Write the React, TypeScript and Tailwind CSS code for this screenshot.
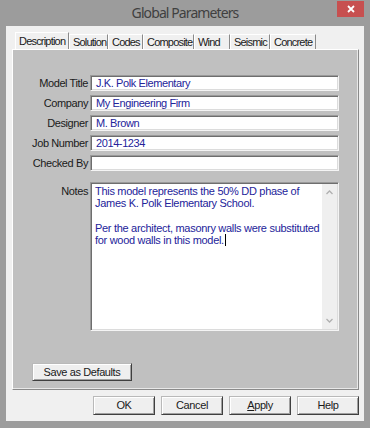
import React from "react";

const tabs: { label: string; w: string; selected?: boolean }[] = [
  { label: "Description", w: "w-[54px]", selected: true },
  { label: "Solution", w: "w-[39px]" },
  { label: "Codes", w: "w-[35px]" },
  { label: "Composite", w: "w-[51px]" },
  { label: "Wind", w: "w-[36px]" },
  { label: "Seismic", w: "w-[40px]" },
  { label: "Concrete", w: "w-[46px]" },
];

const fields: { label: string; value: string }[] = [
  { label: "Model Title", value: "J.K. Polk Elementary" },
  { label: "Company", value: "My Engineering Firm" },
  { label: "Designer", value: "M. Brown" },
  { label: "Job Number", value: "2014-1234" },
  { label: "Checked By", value: "" },
];

const sunken =
  "bg-white border border-t-[#9a9a9a] border-l-[#9a9a9a] border-b-[#f4f4f4] border-r-[#f4f4f4] shadow-[inset_1px_1px_0_#6e6e6e,inset_-1px_-1px_0_#dcdcdc]";

const raised =
  "bg-[#efefef] border border-t-[#b9b9b9] border-l-[#b9b9b9] border-b-[#3f3f3f] border-r-[#3f3f3f] shadow-[inset_1px_1px_0_#ffffff,inset_-1px_-1px_0_#a0a0a0]";

function Btn({ children, w }: { children: React.ReactNode; w: string }) {
  return (
    <div
      className={`${raised} ${w} h-full flex items-center justify-center text-[11px] tracking-[-0.4px] text-[#1a1a1a]`}
    >
      {children}
    </div>
  );
}

export default function App() {
  return (
    <div className="w-[370px] h-[428px] bg-[#9c9c9c] flex flex-col overflow-hidden font-['Liberation_Sans',Arial,sans-serif]">
      {/* Title bar */}
      <div className="h-[26px] relative flex items-center justify-center shrink-0">
        <span className="text-[14px] leading-none text-[#404040] tracking-[-0.9px] font-['Noto_Sans',sans-serif] pb-[1px]">
          Global Parameters
        </span>
        <div className="absolute right-[6px] top-[1px] w-[27px] h-[16px] bg-[#c75050] flex items-center justify-center">
          <svg width="8" height="8" viewBox="0 0 8 8">
            <path d="M1 1 L7 7 M7 1 L1 7" stroke="#ffffff" strokeWidth="1.8" />
          </svg>
        </div>
      </div>

      {/* Client area */}
      <div className="mx-[6px] h-[395px] bg-[#f0f0f0] flex flex-col pt-[6px] pl-[6px] pr-[5px] shrink-0">
        {/* Tabs */}
        <div className="h-[17px] flex items-end pl-[3px] shrink-0">
          {tabs.map((t) => (
            <div
              key={t.label}
              className={`${t.w} ${
                t.selected ? "h-[17px] pt-[2px]" : "h-[15px] pt-[1px]"
              } bg-[#f0f0f0] border-l border-t border-r border-l-white border-t-white border-r-[#8a8a8a] pl-[3px] text-[11px] leading-[12px] tracking-[-0.8px] text-[#1a1a1a] whitespace-nowrap overflow-hidden`}
            >
              {t.label}
            </div>
          ))}
        </div>

        {/* Pane */}
        <div className="h-[341px] bg-[#c0c0c0] border border-t-white border-l-white border-b-[#8a8a8a] border-r-[#8a8a8a] shadow-[inset_-1px_-1px_0_#e8e8e8] flex flex-col pt-[25px] shrink-0">
          <div className="flex flex-col gap-[4px]">
            {fields.map((f) => (
              <div key={f.label} className="flex items-center h-[16px]">
                <div className="w-[75px] text-right text-[11px] tracking-[-0.4px] text-[#1a1a1a] whitespace-nowrap">
                  {f.label}
                </div>
                <div
                  className={`${sunken} ml-[2px] w-[249px] h-[16px] flex items-center pl-[5px] text-[11px] tracking-[-0.4px] text-[#23239a] whitespace-nowrap overflow-hidden`}
                >
                  {f.value}
                </div>
              </div>
            ))}
          </div>

          {/* Notes */}
          <div className="flex items-start mt-[11px]">
            <div className="w-[75px] text-right text-[11px] tracking-[-0.4px] text-[#1a1a1a] pt-[1px]">
              Notes
            </div>
            <div className={`${sunken} ml-[2px] w-[249px] h-[149px] flex`}>
              <div className="flex-1 pl-[4px] pt-[2px] text-[11px] leading-[12.3px] tracking-[-0.3px] text-[#23239a]">
                <div>This model represents the 50% DD phase of</div>
                <div>James K. Polk Elementary School.</div>
                <div>&nbsp;</div>
                <div>Per the architect, masonry walls were substituted</div>
                <div className="flex items-center">
                  for wood walls in this model.
                  <span className="inline-block w-[1px] h-[12px] bg-black ml-[1px]" />
                </div>
              </div>
              <div className="w-[15px] bg-[#efefef] flex flex-col justify-between items-center py-[6px] mr-[1px] my-[1px]">
                <svg width="7" height="5" viewBox="0 0 7 5">
                  <path d="M0.5 4 L3.5 1 L6.5 4" stroke="#b0b0b0" strokeWidth="1.3" fill="none" />
                </svg>
                <svg width="7" height="5" viewBox="0 0 7 5">
                  <path d="M0.5 1 L3.5 4 L6.5 1" stroke="#b0b0b0" strokeWidth="1.3" fill="none" />
                </svg>
              </div>
            </div>
          </div>

          <div className="mt-[32px] ml-[19px] h-[18px] flex">
            <Btn w="w-[100px]">Save as Defaults</Btn>
          </div>
        </div>

        {/* Bottom buttons */}
        <div className="mt-[6px] h-[19px] flex justify-end gap-[6px] shrink-0">
          <Btn w="w-[62px]">OK</Btn>
          <Btn w="w-[62px]">Cancel</Btn>
          <Btn w="w-[62px]">
            <span>
              <span className="underline">A</span>pply
            </span>
          </Btn>
          <Btn w="w-[62px]">Help</Btn>
        </div>
      </div>
    </div>
  );
}
